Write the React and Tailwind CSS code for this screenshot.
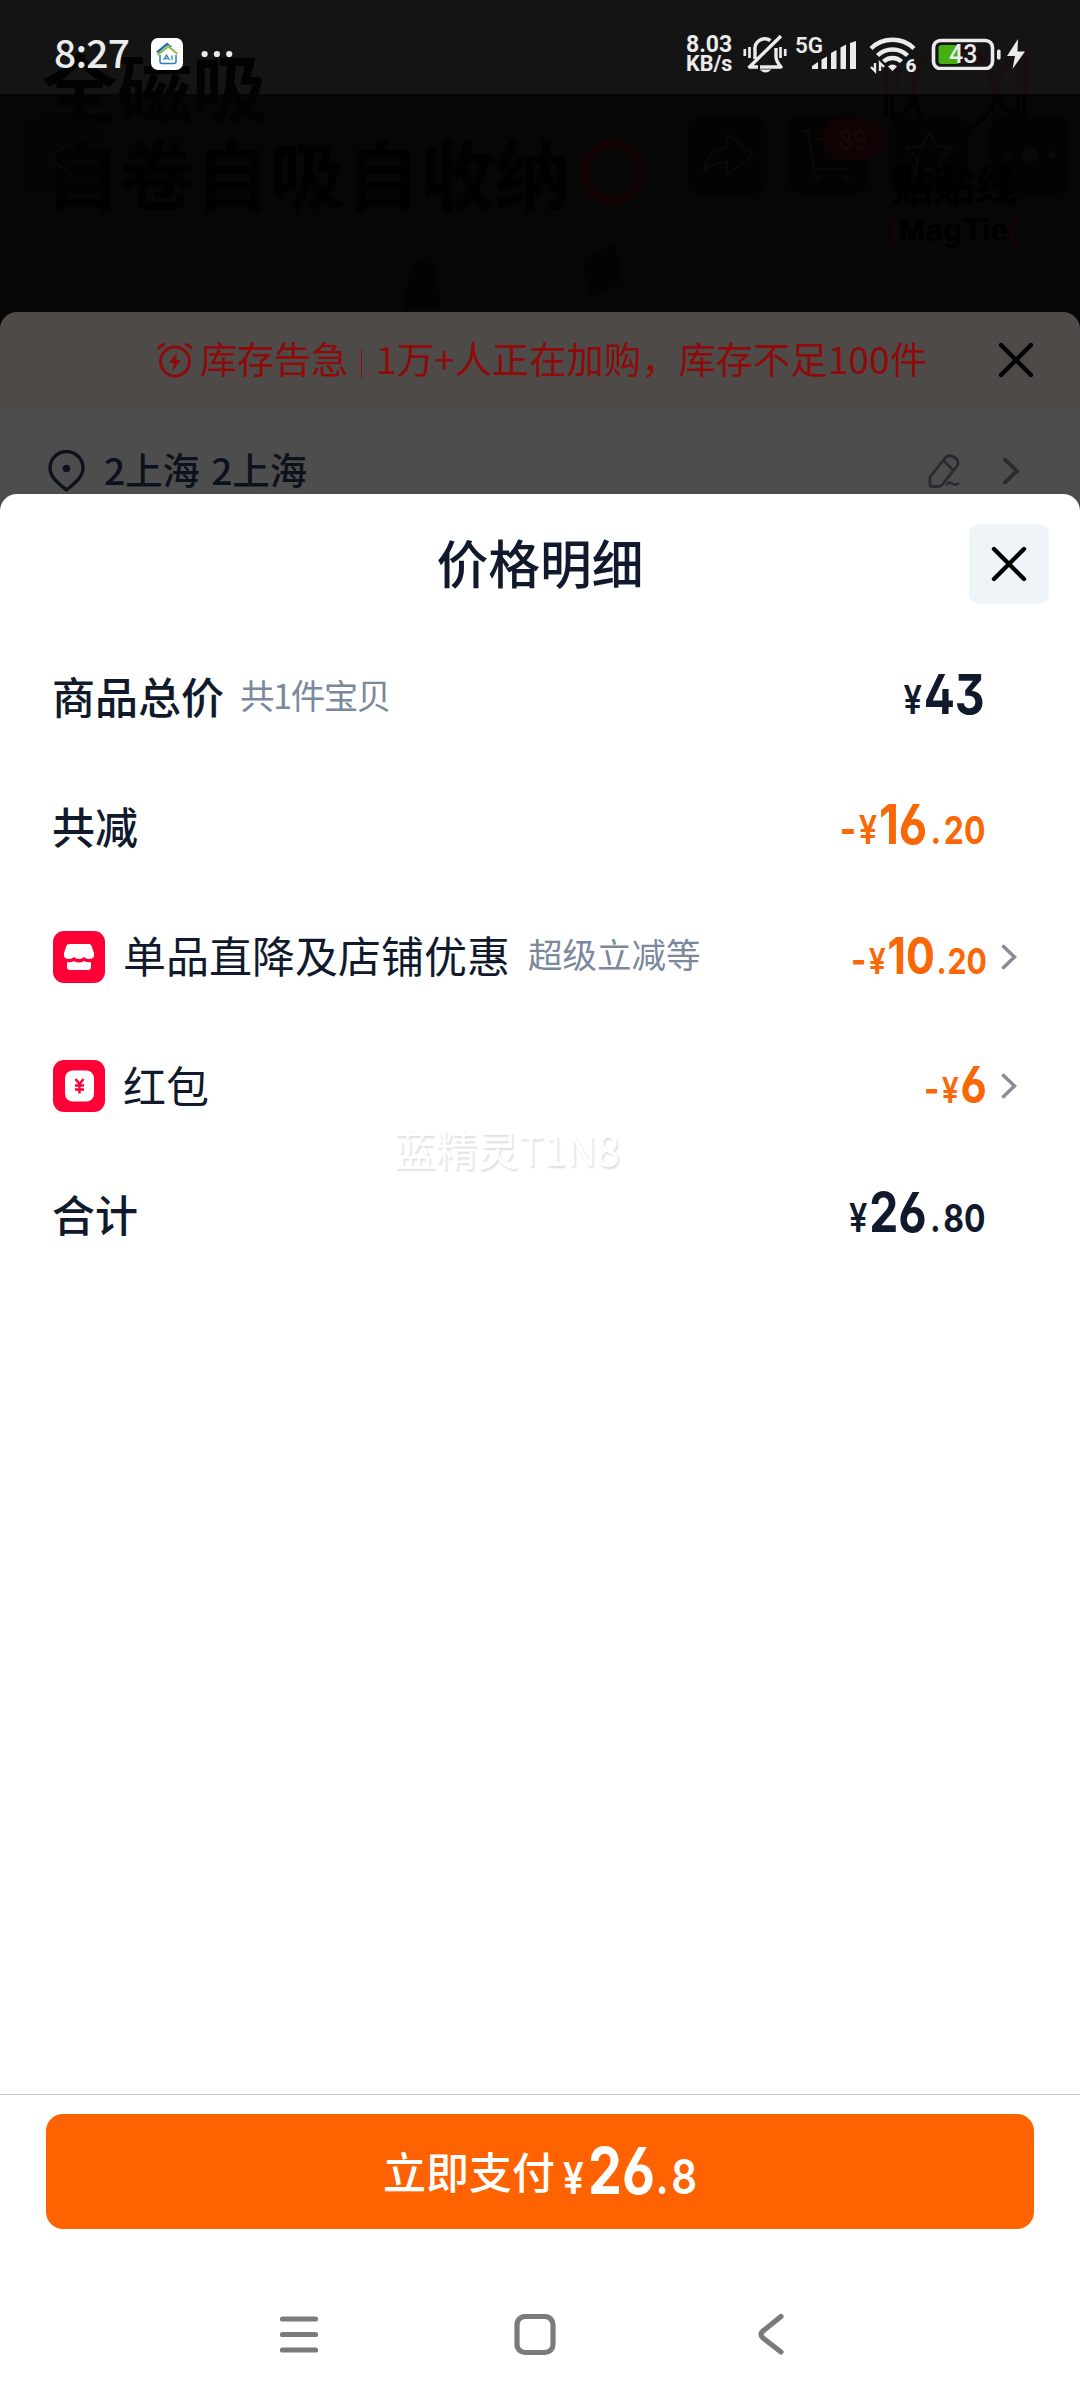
const Close = ({ className }) => (
  <svg viewBox="0 0 36 36" className={className} fill="none" stroke="currentColor" strokeWidth="4.4" strokeLinecap="round">
    <path d="M3 3l30 30M33 3L3 33" />
  </svg>
);

const Chevron = ({ className }) => (
  <svg viewBox="0 0 16 26" className={className} fill="none" stroke="currentColor" strokeWidth="3.6" strokeLinecap="round">
    <path d="M2.5 2.5L13.5 13 2.5 23.5" />
  </svg>
);

function StatusBar() {
  return (
    <div className="relative z-10 flex h-[94px] items-center pt-3.5 pl-[54px] text-[#ebebeb]">
      <span className="w-[97px] pb-[5px] text-[39px] leading-none font-medium tracking-[-.8px]">8:27</span>
      <svg viewBox="0 0 32 32" className="size-8" fill="none">
        <rect width="32" height="32" rx="7" fill="#fff" />
        <path d="M6 14.5L16 6l4 3.5" stroke="#2d6fa8" strokeWidth="2.4" />
        <path d="M6.5 17L17.5 8.5l9 7.5" stroke="#8dc152" strokeWidth="2.2" />
        <path d="M9 17v6.5q0 2 2 2h12q2 0 2-2V17" stroke="#2b7fb5" strokeWidth="1.5" />
        <path d="M12.5 22l3-5 3 5M13.8 20.6h3.4M21 17.5V22" stroke="#3b8cbd" strokeWidth="1.4" />
      </svg>
      <svg viewBox="0 0 34 8" className="ml-[18px] h-2 w-[34px]" fill="currentColor">
        <circle cx="3.6" cy="4" r="3.1" />
        <circle cx="15.9" cy="4" r="3.1" />
        <circle cx="28.2" cy="4" r="3.1" />
      </svg>
      <div className="ml-[451px] w-[57px] font-['Roboto'] text-[23px] leading-[19.5px] font-bold">
        <div>8.03</div>
        <div className="text-[21.5px]">KB/s</div>
      </div>
      <svg viewBox="0 0 44 38" className="h-[38px] w-11" fill="none" stroke="currentColor" strokeWidth="3.4">
        <path d="M12 24V15a10 10 0 0 1 15.5-9.500M33 13v9q0 4 5 10H17M38 1L5.500 33M7 32h8" strokeLinejoin="round" />
        <path d="M1.8 14v7M6.5 12v11M42.2 14v7M37.5 12v11" strokeWidth="2.7" />
        <path d="M16.5 34.5h12q-6 6-12 0z" fill="currentColor" stroke="none" />
      </svg>
      <svg viewBox="0 0 62 38" className="ml-2 h-[38px] w-[62px] overflow-visible" fill="currentColor">
        <text x="0" y="17.5" fontFamily="Roboto" fontSize="22.5" fontWeight="600">5G</text>
        <path d="M17 31l6-4v7h-6zM26.500 24.500l5.500-3V34h-5.500zM36 18l5.500-3v19H36zM45.500 12.500l5.500-3V34h-5.500zM55 8l6-2v28h-6z" />
      </svg>
      <svg viewBox="0 0 48 38" className="ml-3 h-[38px] w-12 overflow-visible" fill="none" stroke="currentColor" strokeWidth="4.5">
        <path d="M2 13.5a31 31 0 0 1 43 0M8.5 20.5a21.5 21.5 0 0 1 30 0M14.5 26.5a13 13 0 0 1 18 0" />
        <path d="M19 31.5q4.5-4 9 0L23.5 36z" fill="currentColor" stroke="none" />
        <path d="M6 28v8l-4-4M11 36v-8l4 4" strokeWidth="2.4" />
        <text x="36.5" y="36.5" fontFamily="Roboto" fontSize="19" fontWeight="800" fill="currentColor" stroke="none">6</text>
      </svg>
      <svg viewBox="0 0 96 32" className="ml-[14px] h-8 w-24" fill="none">
        <rect x="2.5" y="2.5" width="59" height="28" rx="7" stroke="currentColor" strokeWidth="3.6" />
        <rect x="7.5" y="7" width="21" height="19" rx="3" fill="#45b010" />
        <rect x="66" y="11.5" width="3.6" height="10" rx="1.5" fill="currentColor" />
        <text x="18" y="25.3" fontFamily="Roboto" fontSize="25" fontWeight="500" fill="currentColor">43</text>
        <path d="M87 1L76 18h8l-2.5 13L94 13.5h-7.5z" fill="currentColor" />
      </svg>
    </div>
  );
}

// Product image and its floating toolbar, almost lost under the dark overlay
function DimmedHero() {
  return (
    <div className="absolute inset-x-0 top-0 h-[312px] overflow-hidden">
      <div className="h-[94px] bg-[#141414]" />
      <div className="absolute top-[43px] left-[42px] text-[75px] leading-[84px] font-bold text-[#020202]">全磁吸</div>
      <div className="absolute top-[130px] left-[45px] text-[75px] leading-[84px] font-bold text-[#010101]">自卷自吸自收纳</div>
      <div className="absolute top-[139px] left-[580px] size-[66px] rounded-full border-[10px] border-[#110303]" />
      <svg viewBox="0 0 1080 312" className="absolute inset-0 h-[312px] w-[1080px]" fill="none">
        <g stroke="#1a0f0f" strokeWidth="5">
          <path d="M886 66v28M896 66v28M1026 50v44M1018 50v44M914 94q-2-44 40-46 40 2 38 46M997 94q0-24 18-36" />
        </g>
        <g stroke="#020101" strokeWidth="4">
          <path d="M886 94v22M892 94v22q20-4 20-16M1024 94v22M1018 94v20q-16-4-20-16M914 94q4 36 41 36 35-2 40-36" />
        </g>
        <g fill="#030303">
          <rect x="22" y="116" width="80" height="78" rx="14" opacity=".5" />
          <rect x="687" y="116" width="80" height="78" rx="14" />
          <rect x="788" y="116" width="80" height="78" rx="14" />
          <rect x="889" y="116" width="80" height="78" rx="14" />
          <rect x="990" y="116" width="80" height="78" rx="14" />
          <path d="M582 260l32-16 8 36-32 18zM402 310l10-46 20-8 10 54z" opacity=".7" />
        </g>
        <g stroke="#090909" strokeWidth="2.5" strokeLinejoin="round">
          <path d="M70 142L50 158l20 16M704 172q2-22 23-24v-14l26 21-26 20v-13q-15 0-23 10zM802 131h6l6 38h34M815 139h40l-5 22M929 132l7 14 16 2-12 11 3 17-14-8-14 8 3-17-12-11 16-2z" />
          <circle cx="818" cy="177" r="2" />
          <circle cx="846" cy="177" r="2" />
        </g>
        <g fill="#080808">
          <circle cx="1008" cy="155" r="4" />
          <circle cx="1030" cy="155" r="8" />
          <circle cx="1052" cy="155" r="4" />
        </g>
        <rect x="822" y="118" width="62" height="42" rx="20" fill="#0f0202" />
      </svg>
      <div className="absolute top-[118px] left-[822px] w-[62px] text-center text-[26px] leading-[40px] text-[#1a0808]">89</div>
      <div className="absolute top-[160px] left-[891px] text-[42px] leading-[46px] font-bold text-black">贴贴线</div>
      <div className="absolute top-[210px] left-[888px] font-['Liberation_Sans'] text-[32px] leading-[40px] font-bold whitespace-nowrap text-black">
        <span className="text-[#100404]">)</span>MagTie<span className="text-[#100404]">(</span>
      </div>
    </div>
  );
}

function Price({ sign, whole, cents, small }) {
  return (
    <span
      className={`flex origin-right scale-x-[.84] items-baseline font-['Inter'] leading-none font-bold ${small ? 'pb-[3px]' : 'pb-[6px]'} ${sign ? 'text-[#f96706]' : 'text-[#101a2c]'}`}
    >
      {sign && <span className={small ? 'mr-[3px] text-[39px]' : 'mr-[3px] text-[42px]'}>-</span>}
      <span className={small ? 'mr-0.5 text-[36px] font-semibold' : 'mr-0.5 text-[39px] font-semibold'}>¥</span>
      <span className={`[font-feature-settings:'ss01'] ${small ? 'text-[51px]' : 'text-[55px]'}`}>{whole}</span>
      {cents && (
        <span className={small ? 'text-[36px]' : 'text-[38px]'}>
          <span className={small ? 'mr-px ml-[2px]' : 'mr-[3px] ml-1'}>.</span>
          {cents}
        </span>
      )}
    </span>
  );
}

const ShopIcon = () => (
  <svg viewBox="0 0 52 52" className="mr-[18px] ml-px size-[52px]">
    <rect width="52" height="52" rx="11" fill="#ff0036" />
    <path d="M16 13h20q2 0 2.6 2l2.4 7q1 6-5 6-3 0-5-2-2 2-5 2t-5-2q-2 2-5 2-6 0-5-6l2.4-7q.6-2 2.6-2z" fill="#fff" />
    <path d="M14 31q4 1 7-1 5 3 10 0 4 2 7 1v5q0 3-3 3H17q-3 0-3-3z" fill="#fff" />
  </svg>
);

const CouponIcon = () => (
  <svg viewBox="0 0 52 52" className="mr-[18px] ml-px size-[52px]">
    <rect width="52" height="52" rx="11" fill="#ff0036" />
    <rect x="12" y="10.5" width="29" height="31" rx="7.5" fill="#fff" />
    <path d="M22.5 19l4 5 4-5M26.5 24v9.5M22 25.5h9M22 29.5h9" fill="none" stroke="#ff0036" strokeWidth="2.4" />
  </svg>
);

const rows = [
  { label: '商品总价', note: '共1件宝贝', whole: '43' },
  { label: '共减', sign: true, whole: '16', cents: '20' },
  { icon: <ShopIcon />, label: '单品直降及店铺优惠', note: '超级立减等', sign: true, whole: '10', cents: '20' },
  { icon: <CouponIcon />, label: '红包', sign: true, whole: '6' },
  { label: '合计', whole: '26', cents: '80' },
];

function Row({ icon, label, note, ...price }) {
  return (
    <div className="flex h-[129.5px] items-center pr-[63px] pl-[52px]">
      {icon}
      <span className={`pb-1 text-[43px] leading-none text-[#101a2c] ${icon ? 'font-normal' : 'font-medium'}`}>{label}</span>
      {note && (
        <span className={`pb-[7px] text-[34.5px] leading-none text-[#7c889c] ${icon ? 'ml-[18px]' : 'ml-4 tracking-[-1.5px]'}`}>
          {note}
        </span>
      )}
      <div className="ml-auto flex items-center">
        <Price {...price} small={!!icon} />
        <div className={icon ? 'w-[30px] pl-[14px]' : 'w-8'}>{icon && <Chevron className="h-[26px] w-4 text-[#8a8c98]" />}</div>
      </div>
    </div>
  );
}

export default function App() {
  return (
    <div className="relative flex h-[2400px] w-[1080px] flex-col overflow-hidden bg-[#060606] font-['Noto_Sans_CJK_SC',sans-serif]">
      <DimmedHero />
      <StatusBar />

      <div className="relative mt-[218px] h-[182px] shrink-0">
        <div className="flex h-[99px] items-center rounded-t-[17px] bg-[#4e4a47] pr-[46px] pb-[3px] pl-[157px] text-[37.3px] leading-none text-[#8d0b0b]">
          <svg viewBox="0 0 36 36" className="mr-[7px] size-9" fill="none" stroke="currentColor" strokeWidth="3">
            <circle cx="18" cy="19.5" r="14.5" />
            <path d="M1.5 7Q3 3 8 2.5M34.5 7Q33 3 28 2.5" />
            <path d="M20 10l-8 11h5l-1.5 8L24 18h-5z" fill="currentColor" stroke="none" />
          </svg>
          <span className="pb-0.5 tracking-[-.3px]">库存告急</span>
          <span className="mt-2 mr-[14px] ml-[13px] h-7 w-px bg-[#8d0b0b]" />
          <span className="pb-0.5 whitespace-nowrap">1万+人正在加购，库存不足100件</span>
          <Close className="ml-auto size-9 text-black" />
        </div>
        <div className="flex h-[100px] items-center bg-[#4d4d4d] pt-5 pr-[60px] pl-12 text-[37.3px] leading-none font-medium text-[#0c111c]">
          <svg viewBox="0 0 37 42" className="mr-[19px] h-[42px] w-[37px]" fill="none" stroke="currentColor" strokeWidth="3.4">
            <path d="M18.5 40C10 33 2 27 2 18a16.500 16.500 0 0 1 33 0c0 9-8 15-16.500 22z" strokeLinejoin="round" />
            <circle cx="18.5" cy="18.5" r="3.8" fill="currentColor" stroke="none" />
          </svg>
          <span className="pb-0.5 [word-spacing:3px]">2上海 2上海</span>
          <svg viewBox="0 0 32 34" className="ml-auto h-[34px] w-8 text-[#292b30]" fill="none" stroke="currentColor" strokeWidth="2.8" strokeLinejoin="round">
            <path d="M2 23L17 4q4-4 9-1 6 4 3 9L14 31l-3 1.5H4q-2 0-2-2zM16 7l9 9M18 31q3-4 6-1.5t7-.5" />
          </svg>
          <Chevron className="ml-[42px] h-7 w-[18px] text-[#292b30]" />
        </div>
      </div>

      <div className="relative flex flex-1 flex-col rounded-t-[17px] bg-white">
        <div className="flex h-[139px] items-center justify-end pt-px pr-[31px]">
          <h1 className="flex-1 pb-[5px] pl-[111px] text-center text-[51.8px] leading-none font-medium text-[#101a2c]">价格明细</h1>
          <button className="flex size-20 items-center justify-center rounded-[10px] bg-[#eff4f9]">
            <Close className="size-9 text-black" />
          </button>
        </div>
        {rows.map((row) => (
          <Row key={row.label} {...row} />
        ))}
        <div className="absolute top-[634px] left-[394px] text-[41.5px] leading-none whitespace-nowrap text-white [text-shadow:1.5px_1.5px_2px_#dedede]">
          蓝精灵T1N8
        </div>

        <div className="mt-auto h-[306px] border-t border-[#c8c8c8] px-[46px] pt-[19px]">
          <button className="flex h-[115px] w-full items-center rounded-[17px] bg-[#ff6200] pl-[337px] text-white">
            <span className="pb-[3px] text-[43px] leading-none font-medium">立即支付</span>
            <span className="ml-[8px] flex origin-left scale-x-[.84] items-baseline pb-0.5 font-['Inter'] text-[48px] leading-none font-semibold">
              <span className="mr-[5px] text-[44px]">¥</span>
              <span className="text-[64px] font-bold [font-feature-settings:'ss01']">26</span>
              <span>
                <span className="mr-[3px] ml-px">.</span>8
              </span>
            </span>
          </button>
          <svg viewBox="0 0 600 50" className="mt-[80px] ml-[194px] h-[50px] w-[600px]" fill="none" stroke="#7b7b7b" strokeWidth="5.2" strokeLinecap="round" strokeLinejoin="round">
            <path d="M42.5 10h33M42.5 25.5h33M42.5 41h33" />
            <rect x="277" y="7.5" width="36" height="36" rx="8" />
            <path d="M541 7.5l-18 14.5q-4 3.5 0 7L541 43" />
          </svg>
        </div>
      </div>
    </div>
  );
}
